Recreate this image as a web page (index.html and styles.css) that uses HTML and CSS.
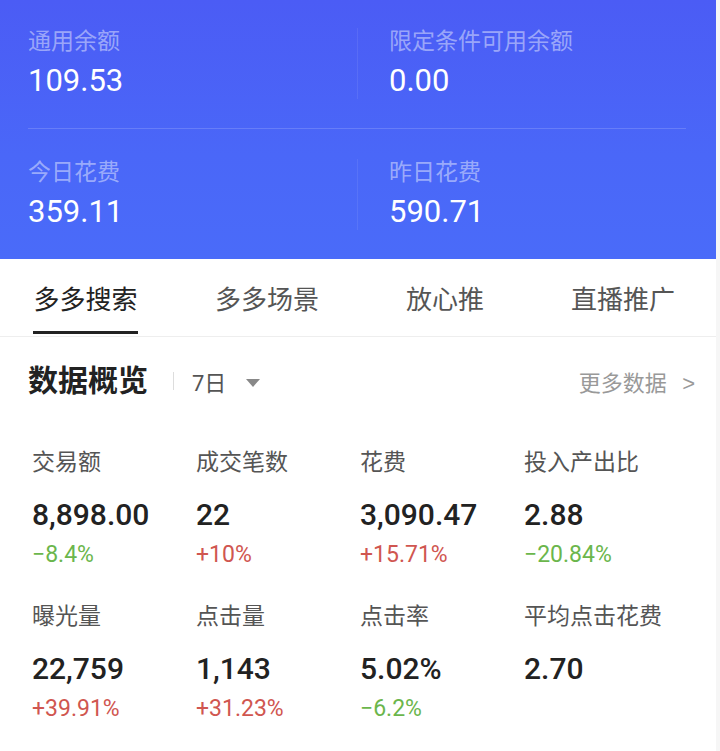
FILE: index.html
```html
<!DOCTYPE html>
<html lang="zh-CN">
<head>
  <meta charset="UTF-8">
  <meta name="viewport" content="width=device-width, initial-scale=1.0">
  <title>推广数据</title>
  <link rel="stylesheet" href="styles.css">
</head>
<body>
  <div class="page">

    <!-- Balance panel -->
    <div class="balance">
      <div class="balance-row">
        <div class="stat">
          <div class="stat-label">通用余额</div>
          <div class="stat-value">109.53</div>
        </div>
        <div class="stat stat-right">
          <div class="stat-label">限定条件可用余额</div>
          <div class="stat-value">0.00</div>
        </div>
      </div>
      <div class="balance-row">
        <div class="stat">
          <div class="stat-label">今日花费</div>
          <div class="stat-value">359.11</div>
        </div>
        <div class="stat stat-right">
          <div class="stat-label">昨日花费</div>
          <div class="stat-value">590.71</div>
        </div>
      </div>
    </div>

    <!-- Tabs -->
    <div class="tabs">
      <div class="tab active"><span>多多搜索</span></div>
      <div class="tab"><span>多多场景</span></div>
      <div class="tab"><span>放心推</span></div>
      <div class="tab"><span>直播推广</span></div>
    </div>

    <!-- Data overview -->
    <div class="overview">
      <div class="overview-head">
        <span class="overview-title">数据概览</span>
        <span class="divider"></span>
        <span class="range">7日</span>
        <span class="caret"></span>
        <span class="more">更多数据 <span class="chev">&gt;</span></span>
      </div>

      <div class="metrics">
        <div class="metric">
          <div class="metric-label">交易额</div>
          <div class="metric-value">8,898.00</div>
          <div class="metric-change down">−8.4%</div>
        </div>
        <div class="metric">
          <div class="metric-label">成交笔数</div>
          <div class="metric-value">22</div>
          <div class="metric-change up">+10%</div>
        </div>
        <div class="metric">
          <div class="metric-label">花费</div>
          <div class="metric-value">3,090.47</div>
          <div class="metric-change up">+15.71%</div>
        </div>
        <div class="metric">
          <div class="metric-label">投入产出比</div>
          <div class="metric-value">2.88</div>
          <div class="metric-change down">−20.84%</div>
        </div>
        <div class="metric">
          <div class="metric-label">曝光量</div>
          <div class="metric-value">22,759</div>
          <div class="metric-change up">+39.91%</div>
        </div>
        <div class="metric">
          <div class="metric-label">点击量</div>
          <div class="metric-value">1,143</div>
          <div class="metric-change up">+31.23%</div>
        </div>
        <div class="metric">
          <div class="metric-label">点击率</div>
          <div class="metric-value">5.02%</div>
          <div class="metric-change down">−6.2%</div>
        </div>
        <div class="metric">
          <div class="metric-label">平均点击花费</div>
          <div class="metric-value">2.70</div>
          <div class="metric-change"></div>
        </div>
      </div>
    </div>

  </div>
</body>
</html>
```

FILE: styles.css
```css
body {
  margin: 0;
  padding: 0;
  background-color: #f6f6f6;
  font-family: Roboto, "Noto Sans CJK SC", sans-serif;
  color: #222;
}

.page {
  width: 716px;
  min-height: 751px;
  background-color: #fff;
}

/* balance panel */
.balance {
  background: linear-gradient(180deg, #4b5cf5 0%, #4a67f8 60%, #4a6bf9 100%);
  padding: 0 30px 0 28px;
}

.balance-row {
  display: grid;
  grid-template-columns: 329px 1fr;
  padding: 28px 0 29px;
}

.balance-row + .balance-row {
  border-top: 1px solid rgba(255, 255, 255, 0.16);
  padding-top: 30px;
}

.stat-right {
  border-left: 1px solid rgba(255, 255, 255, 0.08);
  padding-left: 31px;
}

.stat-label {
  font-size: 23px;
  line-height: 28px;
  color: rgba(255, 255, 255, 0.45);
}

.stat-value {
  margin-top: 7px;
  font-size: 31px;
  line-height: 36px;
  color: #fff;
}

/* tabs */
.tabs {
  display: grid;
  grid-template-columns: repeat(4, 178px);
  padding-bottom: 2px;
  border-bottom: 1px solid #eee;
}

.tab {
  text-align: center;
  padding-top: 24px;
}

.tab:first-child {
  padding-right: 7px;
}

.tab span {
  display: inline-block;
  font-size: 26px;
  line-height: 34px;
  color: #555;
  padding-bottom: 14px;
  border-bottom: 3px solid transparent;
}

.tab.active span {
  color: #222;
  border-bottom-color: #222;
}

/* overview */
.overview {
  padding: 24px 21px 0 28px;
}

.overview-head {
  display: flex;
  align-items: center;
  height: 40px;
}

.overview-title {
  font-size: 30px;
  font-weight: bold;
  line-height: 40px;
  color: #222;
}

.divider {
  width: 1px;
  height: 18px;
  background-color: #ddd;
  margin: 0 18px 0 25px;
}

.range {
  font-size: 22px;
  color: #555;
}

.caret {
  width: 0;
  height: 0;
  border-left: 7px solid transparent;
  border-right: 7px solid transparent;
  border-top: 8px solid #888;
  margin-left: 20px;
  margin-top: 4px;
}

.more {
  margin-left: auto;
  font-size: 22px;
  color: #999;
}

.chev {
  margin-left: 10px;
  font-family: "Liberation Sans", sans-serif;
}

.metrics {
  display: grid;
  grid-template-columns: repeat(4, 164px);
  row-gap: 32px;
  padding: 47px 0 0 4px;
}

.metric-label {
  font-size: 23px;
  line-height: 30px;
  color: #555;
}

.metric-value {
  margin-top: 18px;
  font-size: 30px;
  font-weight: 500;
  line-height: 38px;
  color: #222;
}

.metric-change {
  margin-top: 6px;
  font-size: 23px;
  line-height: 30px;
  height: 30px;
}

.metric-change.up {
  color: #d05650;
}

.metric-change.down {
  color: #6bb64c;
}
```
